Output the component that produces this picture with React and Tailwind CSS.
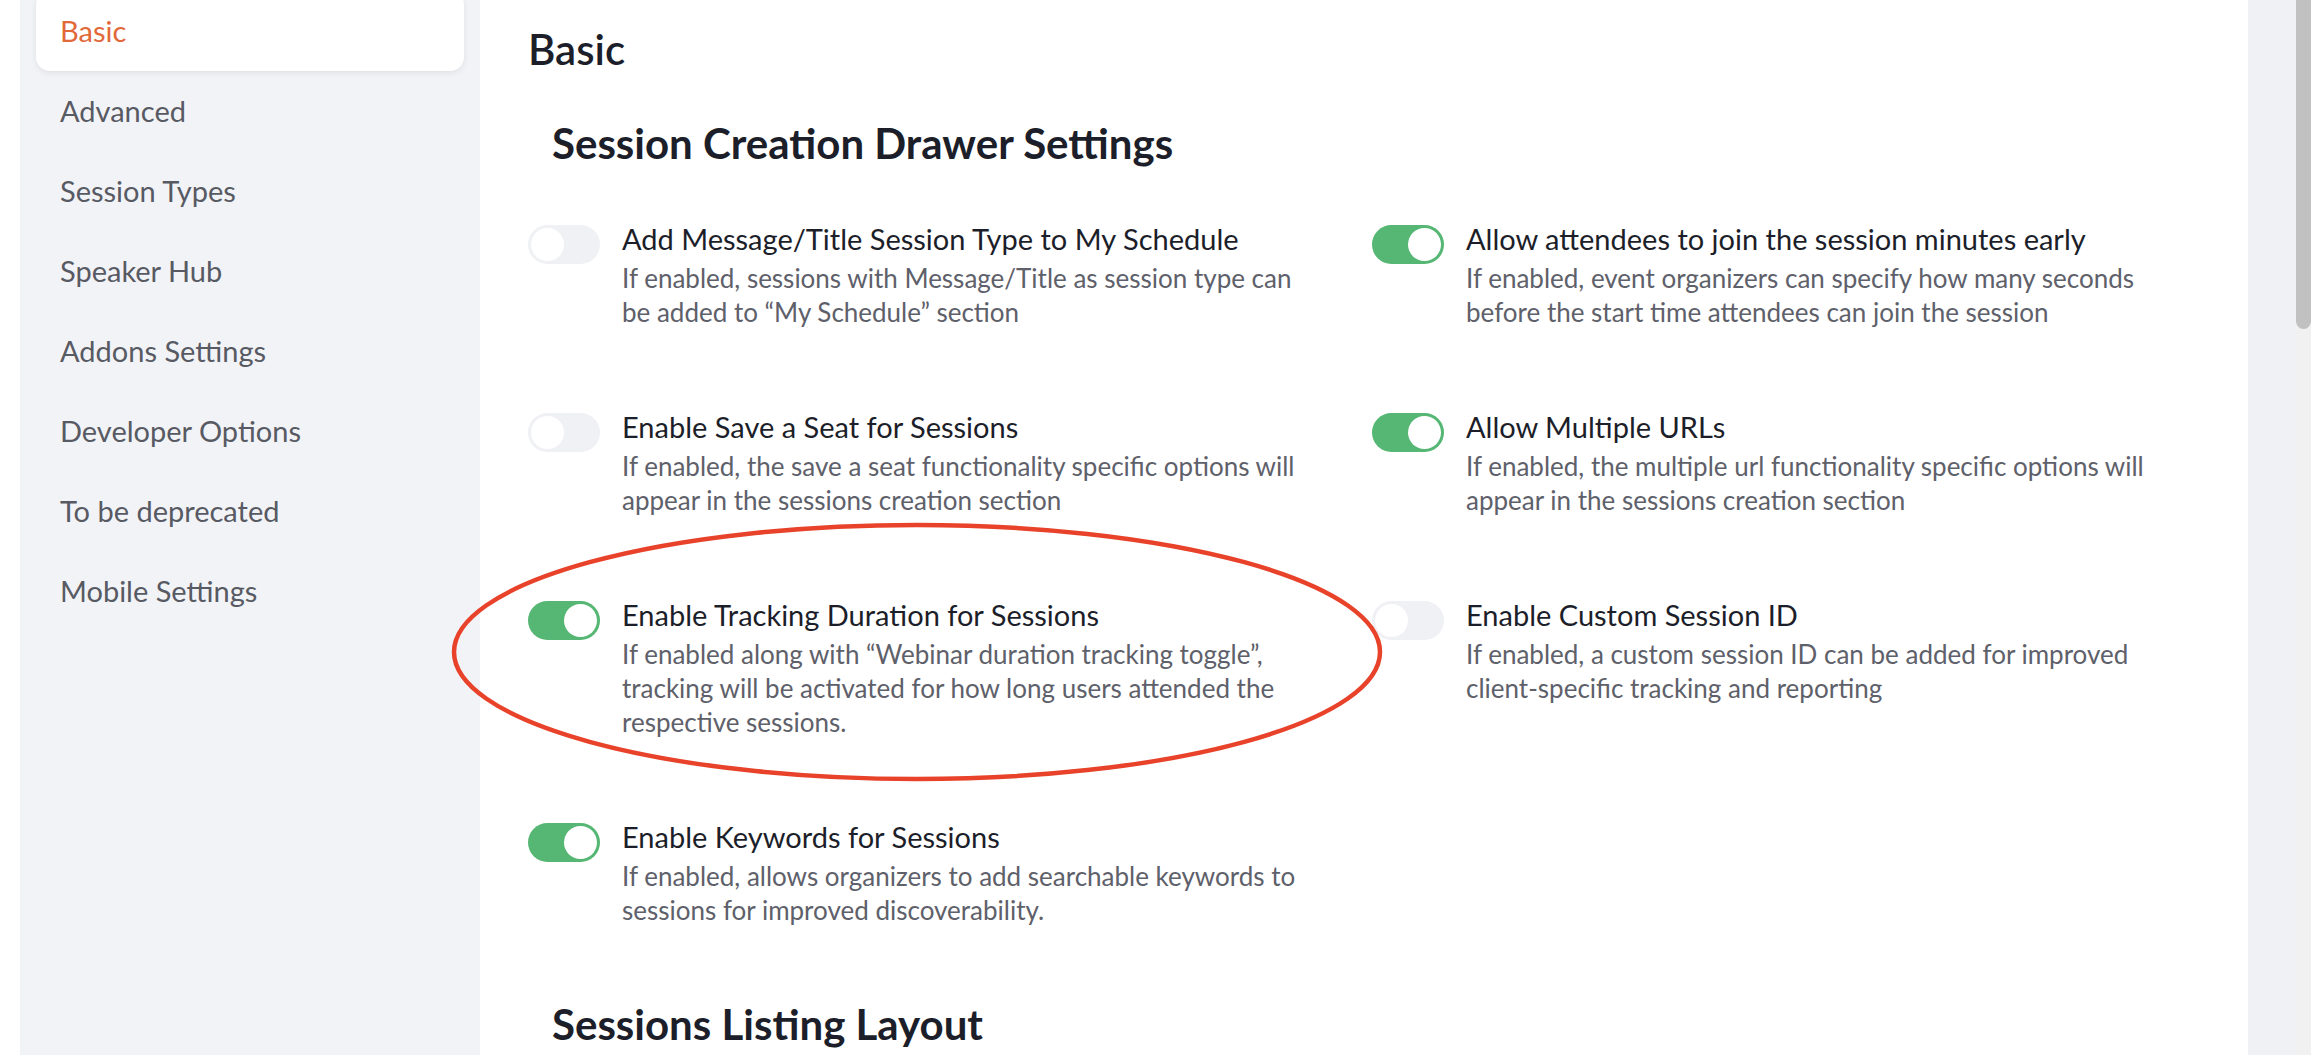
import React from 'react'

const NAV = [
  'Basic',
  'Advanced',
  'Session Types',
  'Speaker Hub',
  'Addons Settings',
  'Developer Options',
  'To be deprecated',
  'Mobile Settings',
]

const ROWS = [
  [
    {
      on: false,
      title: 'Add Message/Title Session Type to My Schedule',
      lines: ['If enabled, sessions with Message/Title as session type can', 'be added to “My Schedule” section'],
    },
    {
      on: true,
      title: 'Allow attendees to join the session minutes early',
      lines: ['If enabled, event organizers can specify how many seconds', 'before the start time attendees can join the session'],
    },
  ],
  [
    {
      on: false,
      title: 'Enable Save a Seat for Sessions',
      lines: ['If enabled, the save a seat functionality specific options will', 'appear in the sessions creation section'],
    },
    {
      on: true,
      title: 'Allow Multiple URLs',
      lines: ['If enabled, the multiple url functionality specific options will', 'appear in the sessions creation section'],
    },
  ],
  [
    {
      on: true,
      title: 'Enable Tracking Duration for Sessions',
      lines: [
        'If enabled along with “Webinar duration tracking toggle”,',
        'tracking will be activated for how long users attended the',
        'respective sessions.',
      ],
    },
    {
      on: false,
      title: 'Enable Custom Session ID',
      lines: ['If enabled, a custom session ID can be added for improved', 'client-specific tracking and reporting'],
    },
  ],
  [
    {
      on: true,
      title: 'Enable Keywords for Sessions',
      lines: ['If enabled, allows organizers to add searchable keywords to', 'sessions for improved discoverability.'],
    },
    null,
  ],
]

function Toggle({ on }) {
  return (
    <div
      className={`w-[72px] h-[39px] shrink-0 rounded-full flex items-center px-[3px] ${
        on ? 'bg-[#55b773] justify-end' : 'bg-[#f0f1f5] justify-start'
      }`}
    >
      <div className="w-[33px] h-[33px] rounded-full bg-white" />
    </div>
  )
}

function Setting({ item }) {
  if (!item) return <div />
  return (
    <div className="flex gap-[22px]">
      <Toggle on={item.on} />
      <div className="mt-[-3px]">
        <div className="text-[29px] leading-[34px] text-[#1c1e29] whitespace-nowrap">{item.title}</div>
        <div className="mt-[5px] text-[26px] leading-[34px] text-[#5e606a] whitespace-nowrap">
          {item.lines.map((l) => (
            <div key={l}>{l}</div>
          ))}
        </div>
      </div>
    </div>
  )
}

export default function App() {
  return (
    <div
      className="relative flex w-[2311px] h-[1055px] overflow-hidden bg-white"
      style={{ fontFamily: 'Lato, "Open Sans", sans-serif' }}
    >
      {/* sidebar */}
      <div className="w-[20px] shrink-0 bg-white" />
      <div className="w-[460px] shrink-0 bg-[#f2f3f7] px-[16px] mt-[-9px]">
        {NAV.map((n, i) => (
          <div
            key={n}
            className={`h-[80px] flex items-center px-[24px] text-[29px] ${
              i === 0
                ? 'bg-white rounded-[14px] shadow-[0_2px_6px_rgba(0,0,0,0.08)] text-[#e2683a] h-[79px]'
                : 'text-[#585a63]'
            }`}
          >
            {n}
          </div>
        ))}
      </div>

      {/* main */}
      <div className="flex-1 pl-[48px] pt-[26px]">
        <h1 className="text-[42px] leading-[46px] font-semibold text-[#1c1e29]">Basic</h1>
        <h2 className="mt-[48px] ml-[24px] text-[42px] leading-[46px] font-bold text-[#1c1e29]">
          Session Creation Drawer Settings
        </h2>
        <div className="mt-[59px] grid grid-cols-[844px_800px] gap-y-[84px]">
          {ROWS.map((row, i) => (
            <React.Fragment key={i}>
              <Setting item={row[0]} />
              <Setting item={row[1]} />
            </React.Fragment>
          ))}
        </div>
        <h2 className="mt-[74px] ml-[24px] text-[42px] leading-[46px] font-bold text-[#1c1e29]">
          Sessions Listing Layout
        </h2>
      </div>

      {/* right gutter + scrollbar */}
      <div className="w-[48px] shrink-0 bg-[#f0f1f5]" />
      <div className="w-[15px] shrink-0 bg-[#f1f1f1]">
        <div className="h-[329px] w-full bg-[#c1c1c1] rounded-b-full" />
      </div>

      {/* annotation ellipse */}
      <svg
        className="absolute left-[450px] top-[521px] pointer-events-none"
        width="934"
        height="262"
        viewBox="0 0 934 262"
      >
        <ellipse cx="467" cy="131" rx="463" ry="127" fill="none" stroke="#e8432a" strokeWidth="4.5" />
      </svg>
    </div>
  )
}
